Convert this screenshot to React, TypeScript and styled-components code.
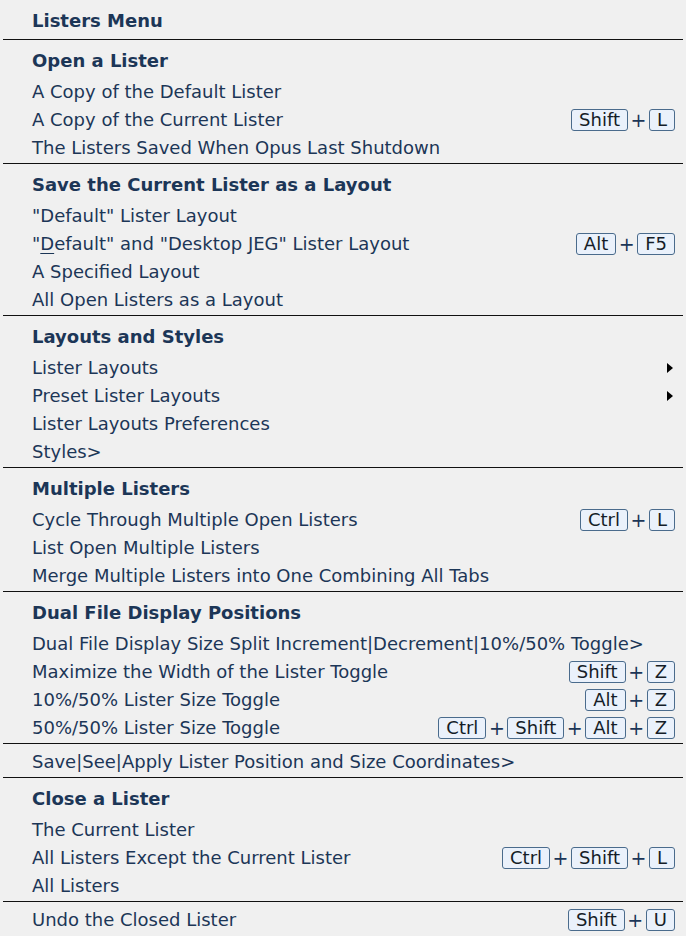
import React from 'react';
import styled, { createGlobalStyle } from 'styled-components';

type Item = {
  label: React.ReactNode;
  keys?: string[];
  submenu?: boolean;
};

type Section = {
  title?: string;
  items: Item[];
};

const sections: Section[] = [
  {
    title: 'Open a Lister',
    items: [
      { label: 'A Copy of the Default Lister' },
      { label: 'A Copy of the Current Lister', keys: ['Shift', 'L'] },
      { label: 'The Listers Saved When Opus Last Shutdown' },
    ],
  },
  {
    title: 'Save the Current Lister as a Layout',
    items: [
      { label: '"Default" Lister Layout' },
      {
        label: (
          <>
            "<u>D</u>efault" and "Desktop JEG" Lister Layout
          </>
        ),
        keys: ['Alt', 'F5'],
      },
      { label: 'A Specified Layout' },
      { label: 'All Open Listers as a Layout' },
    ],
  },
  {
    title: 'Layouts and Styles',
    items: [
      { label: 'Lister Layouts', submenu: true },
      { label: 'Preset Lister Layouts', submenu: true },
      { label: 'Lister Layouts Preferences' },
      { label: 'Styles>' },
    ],
  },
  {
    title: 'Multiple Listers',
    items: [
      { label: 'Cycle Through Multiple Open Listers', keys: ['Ctrl', 'L'] },
      { label: 'List Open Multiple Listers' },
      { label: 'Merge Multiple Listers into One Combining All Tabs' },
    ],
  },
  {
    title: 'Dual File Display Positions',
    items: [
      { label: 'Dual File Display Size Split Increment|Decrement|10%/50% Toggle>' },
      { label: 'Maximize the Width of the Lister Toggle', keys: ['Shift', 'Z'] },
      { label: '10%/50% Lister Size Toggle', keys: ['Alt', 'Z'] },
      { label: '50%/50% Lister Size Toggle', keys: ['Ctrl', 'Shift', 'Alt', 'Z'] },
    ],
  },
  {
    items: [{ label: 'Save|See|Apply Lister Position and Size Coordinates>' }],
  },
  {
    title: 'Close a Lister',
    items: [
      { label: 'The Current Lister' },
      { label: 'All Listers Except the Current Lister', keys: ['Ctrl', 'Shift', 'L'] },
      { label: 'All Listers' },
    ],
  },
  {
    items: [{ label: 'Undo the Closed Lister', keys: ['Shift', 'U'] }],
  },
];

export default function App() {
  return (
    <>
      <GlobalStyle />
      <Menu>
        <MenuTitle>Listers Menu</MenuTitle>
        {sections.map((section, i) => (
          <Group key={i} $hasTitle={!!section.title}>
            {section.title && <GroupTitle>{section.title}</GroupTitle>}
            {section.items.map((item, j) => (
              <Row key={j}>
                <span>{item.label}</span>
                {item.keys && (
                  <Shortcut>
                    {item.keys.map((k, n) => (
                      <React.Fragment key={k}>
                        {n > 0 && <Plus>+</Plus>}
                        <Key>{k}</Key>
                      </React.Fragment>
                    ))}
                  </Shortcut>
                )}
                {item.submenu && <Arrow />}
              </Row>
            ))}
          </Group>
        ))}
      </Menu>
    </>
  );
}

const GlobalStyle = createGlobalStyle`
  html, body {
    margin: 0;
    padding: 0;
    background: #f0f0f0;
  }
  body {
    font-family: "DejaVu Sans", Verdana, sans-serif;
    font-size: 18px;
    color: #1c3657;
  }
`;

const Menu = styled.div`
  margin: 0 3px;
  width: 680px;
`;

const MenuTitle = styled.div`
  height: 28px;
  line-height: 28px;
  padding: 7px 0 4px 29px;
  font-weight: bold;
`;

const Group = styled.div<{ $hasTitle: boolean }>`
  border-top: 1px solid #111;
  padding: ${(p) => (p.$hasTitle ? '7px' : '4px')} 0 1px;
`;

const GroupTitle = styled.div`
  height: 28px;
  line-height: 28px;
  margin-bottom: 3px;
  padding-left: 29px;
  font-weight: bold;
`;

const Row = styled.div`
  display: flex;
  align-items: center;
  justify-content: space-between;
  height: 28px;
  line-height: 28px;
  padding: 0 8px 0 29px;
  white-space: nowrap;

  u {
    text-decoration-thickness: 1px;
    text-underline-offset: 3px;
  }
`;

const Shortcut = styled.span`
  display: flex;
  align-items: center;
`;

const Key = styled.span`
  display: inline-block;
  height: 20px;
  line-height: 20px;
  padding: 0 7px;
  border: 1px solid #4a6b8c;
  border-radius: 3px;
  background: #eaf1fb;
  color: #151d28;
  font-size: 18px;
`;

const Plus = styled.span`
  width: 21px;
  text-align: center;
  font-size: 19px;
`;

const Arrow = styled.span`
  width: 0;
  height: 0;
  margin-right: 2px;
  border-top: 5px solid transparent;
  border-bottom: 5px solid transparent;
  border-left: 6px solid #000;
`;
